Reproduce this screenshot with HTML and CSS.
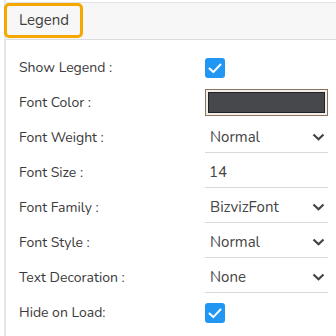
FILE: index.html
```html
<!DOCTYPE html>
<html>
<head>
<meta charset="utf-8">
<link rel="stylesheet" href="styles.css">
</head>
<body>
<div class="panel">
  <div class="header">
    <span class="title">Legend</span>
    <div class="highlight"></div>
  </div>
  <div class="rows">
    <div class="row">
      <span class="label">Show Legend :</span>
      <span class="check"><svg width="20" height="20" viewBox="0 0 20 20"><path d="M4.5 10.5l3.8 3.6L15.5 6.5" fill="none" stroke="#fff" stroke-width="2" stroke-linecap="round" stroke-linejoin="round"/></svg></span>
    </div>
    <div class="row">
      <span class="label">Font Color :</span>
      <span class="color"><span class="swatch"></span></span>
    </div>
    <div class="row">
      <span class="label">Font Weight :</span>
      <span class="select">Normal<svg class="chev" width="13" height="8" viewBox="0 0 13 8"><path d="M1.5 1.5l5 4.8 5-4.8" fill="none" stroke="#444" stroke-width="2.2"/></svg></span>
    </div>
    <div class="row">
      <span class="label">Font Size :</span>
      <span class="select input">14</span>
    </div>
    <div class="row">
      <span class="label">Font Family :</span>
      <span class="select">BizvizFont<svg class="chev" width="13" height="8" viewBox="0 0 13 8"><path d="M1.5 1.5l5 4.8 5-4.8" fill="none" stroke="#444" stroke-width="2.2"/></svg></span>
    </div>
    <div class="row">
      <span class="label">Font Style :</span>
      <span class="select">Normal<svg class="chev" width="13" height="8" viewBox="0 0 13 8"><path d="M1.5 1.5l5 4.8 5-4.8" fill="none" stroke="#444" stroke-width="2.2"/></svg></span>
    </div>
    <div class="row">
      <span class="label">Text Decoration :</span>
      <span class="select">None<svg class="chev" width="13" height="8" viewBox="0 0 13 8"><path d="M1.5 1.5l5 4.8 5-4.8" fill="none" stroke="#444" stroke-width="2.2"/></svg></span>
    </div>
    <div class="row">
      <span class="label">Hide on Load:</span>
      <span class="check"><svg width="20" height="20" viewBox="0 0 20 20"><path d="M4.5 10.5l3.8 3.6L15.5 6.5" fill="none" stroke="#fff" stroke-width="2" stroke-linecap="round" stroke-linejoin="round"/></svg></span>
    </div>
  </div>
</div>
</body>
</html>
```
FILE: styles.css
```css
html, body {
  margin: 0;
  padding: 0;
  background: #fff;
}
body {
  font-family: "Nunito", "Lato", "Open Sans", sans-serif;
  color: #3a3a3a;
  width: 336px;
  height: 336px;
  overflow: hidden;
}
.panel {
  margin-left: 4px;
  border-left: 2px solid #e4e8ed;
  height: 336px;
  padding-top: 2px;
}
.header {
  position: relative;
  background: #f7f7f7;
  border-top: 1px solid #e2e2e2;
  border-bottom: 1px solid #dcdcdc;
  display: flex;
  align-items: center;
  padding-left: 13px;
  padding-bottom: 3px;
  box-sizing: border-box;
  height: 38px;
}
.title {
  font-size: 15px;
  color: #3f3f3f;
}
.highlight {
  position: absolute;
  left: -2px;
  top: 0;
  width: 79px;
  height: 35px;
  box-sizing: border-box;
  border: 3px solid #f5a800;
  border-radius: 5px;
}
.rows {
  padding-top: 10px;
}
.row {
  display: grid;
  grid-template-columns: 186px 123px;
  align-items: center;
  height: 35px;
  padding-left: 13px;
}
.label {
  font-size: 14px;
  color: #3a3a3a;
}
.check {
  width: 20px;
  height: 20px;
  background: #2196f3;
  border-radius: 3px;
  display: block;
}
.check svg { display: block; }
.color {
  display: block;
  height: 27px;
  box-sizing: border-box;
  border: 1px solid #8d735a;
  background: #f0efee;
  padding: 2px;
}
.swatch {
  display: block;
  height: 100%;
  box-sizing: border-box;
  background: #47484c;
  border: 1px solid #222;
}
.select {
  display: flex;
  align-items: center;
  justify-content: space-between;
  height: 30px;
  box-sizing: border-box;
  border-bottom: 1px solid #d9d9d9;
  padding: 0 3px 0 5px;
  font-size: 15px;
  color: #444;
}
.input { padding-left: 4px; }
.chev { display: block; }
```
